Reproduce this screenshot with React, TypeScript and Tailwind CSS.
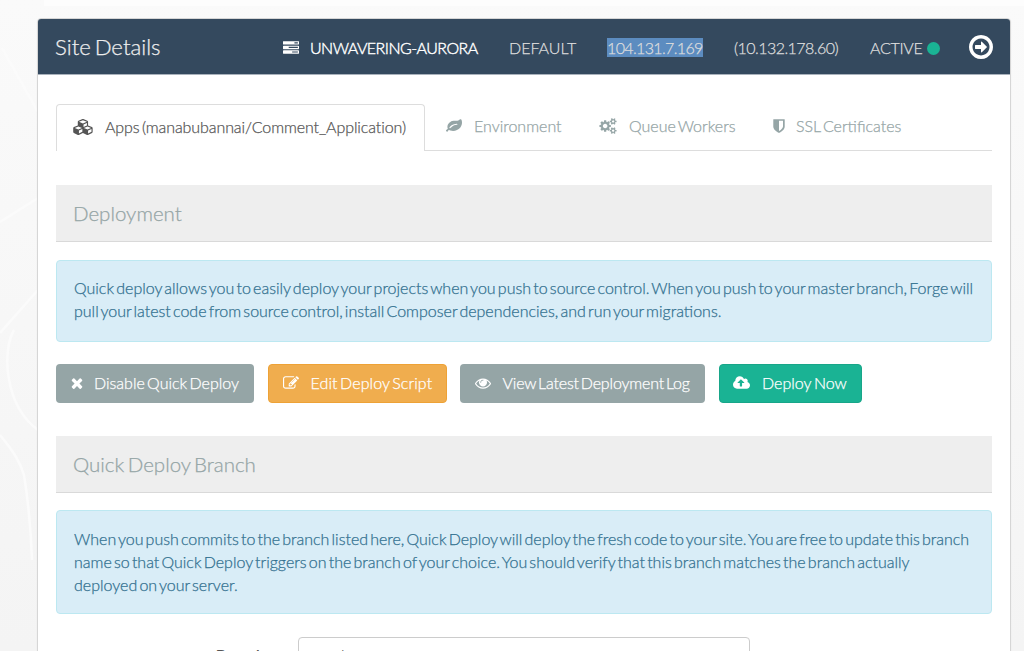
import React from "react";

type IconProps = { box: string; d: string; className: string };

function Icon({ box, d, className }: IconProps) {
  return (
    <svg viewBox={box} fill="currentColor" className={className} aria-hidden="true">
      <path d={d} />
    </svg>
  );
}

const SMALL_COG =
  "v140q0 16-149 31-12 27-30 52 51 113 51 138 0 4-4 7-122 71-124 71-8 0-46-47t-52-68q-20 2-30 2t-30-2q-14 21-52 68t-46 47q-2 0-124-71-4-3-4-7 0-25 51-138-18-25-30-52-149-15-149-31v-140q0-16 149-31 13-29 30-52-51-113-51-138 0-4 4-7 4-2 35-20t59-34 30-16q8 0 46 46.5t52 67.5q20-2 30-2t30 2q51-71 92-112l6-2q4 0 124 70 4 3 4 7 0 25-51 138 17 23 30 52 149 15 149 31z";

const ICONS = {
  tasks:
    "M1024 1408h640v-128h-640v128zm-384-512h1024v-128h-1024v128zm640-512h384v-128h-384v128zm512 832v256q0 26-19 45t-45 19h-1664q-26 0-45-19t-19-45v-256q0-26 19-45t45-19h1664q26 0 45 19t19 45zm0-512v256q0 26-19 45t-45 19h-1664q-26 0-45-19t-19-45v-256q0-26 19-45t45-19h1664q26 0 45 19t19 45zm0-512v256q0 26-19 45t-45 19h-1664q-26 0-45-19t-19-45v-256q0-26 19-45t45-19h1664q26 0 45 19t19 45z",
  cubes:
    "M640 1632l384-192v-314l-384 164v342zm-64-454l404-173-404-173-404 173zm1088 454l384-192v-314l-384 164v342zm-64-454l404-173-404-173-404 173zm-448-293l384-165v-266l-384 164v267zm-64-379l441-189-441-189-441 189zm1088 518v416q0 36-19 67t-52 47l-448 224q-25 14-57 14t-57-14l-448-224q-4-2-7-4-2 2-7 4l-448 224q-25 14-57 14t-57-14l-448-224q-33-16-52-47t-19-67v-416q0-38 21.5-70t56.5-48l434-186v-400q0-38 21.5-70t56.5-48l448-192q23-10 50-10t50 10l448 192q35 16 56.5 48t21.5 70v400l434 186q36 16 57 48t21 70z",
  leaf: "M1280 704q0-26-19-45t-45-19q-172 0-318 49.5t-259.5 134-235.5 219.5q-19 21-19 45 0 26 19 45t45 19q24 0 45-19 27-24 74-71t67-66q137-124 268.5-176t313.5-52q26 0 45-19t19-45zm512-198q0 95-20 193-46 224-184.5 383t-357.5 268q-214 108-438 108-148 0-286-47-15-5-88-42t-96-37q-16 0-39.5 32t-45 70-52.5 70-60 32q-43 0-63.5-17.5t-45.5-59.5q-2-4-6-11t-5.5-10-3-9.5-1.5-13.5q0-35 31-73.5t68-65.5 68-56 31-48q0-4-14-38t-16-44q-9-51-9-104 0-115 43.5-220t119-184.5 170.5-139 204-95.5q55-18 145-25.5t179.5-9 178.5-6 163.5-24 113.5-56.5l29.5-29.5 29.5-28 27-20 36.5-16 43.5-4.5q39 0 70.5 46t47.5 112 24 124 8 96z",
  cogs:
    "M896 896q0-106-75-181t-181-75-181 75-75 181 75 181 181 75 181-75 75-181zm768 512q0-52-38-90t-90-38-90 38-38 90q0 53 37.5 90.5t90.5 37.5 90.5-37.5 37.5-90.5zm0-1024q0-52-38-90t-90-38-90 38-38 90q0 53 37.5 90.5t90.5 37.5 90.5-37.5 37.5-90.5zm-384 421v185q0 10-7 19.5t-16 10.5l-155 24q-11 35-32 76 34 48 90 115 7 11 7 20 0 12-7 19-23 30-82.5 89.5t-78.5 59.5q-11 0-21-7l-115-90q-37 19-77 31-11 108-23 155-7 24-30 24h-186q-11 0-20-7.5t-10-17.5l-23-153q-34-10-75-31l-118 89q-7 7-20 7-11 0-21-8-144-133-144-160 0-9 7-19 10-14 41-53t47-61q-23-44-35-82l-152-24q-10-1-17-9.5t-7-19.5v-185q0-10 7-19.5t16-10.5l155-24q11-35 32-76-34-48-90-115-7-11-7-20 0-12 7-20 22-30 82-89t79-59q11 0 21 7l115 90q34-18 77-32 11-108 23-154 7-24 30-24h186q11 0 20 7.5t10 17.5l23 153q34 10 75 31l118-89q8-7 20-7 11 0 21 8 144 133 144 160 0 8-7 19-12 16-42 54t-45 60q23 48 34 82l152 23q10 2 17 10.5t7 19.5zM1920 1338" +
    SMALL_COG +
    "M1920 314" +
    SMALL_COG,
  shield:
    "M1344 960v-640h-448v1137q119-63 213-137 235-184 235-360zm192-768v768q0 86-33.5 170.5t-83 150-118 127.5-126.5 103-121 77.5-89.5 49.5-42.5 20q-12 6-26 6t-26-6q-16-7-42.5-20t-89.5-49.5-121-77.5-126.5-103-118-127.5-83-150-33.5-170.5v-768q0-26 19-45t45-19h1152q26 0 45 19t19 45z",
  times:
    "M1490 1322q0 40-28 68l-136 136q-28 28-68 28t-68-28l-294-294-294 294q-28 28-68 28t-68-28l-136-136q-28-28-28-68t28-68l294-294-294-294q-28-28-28-68t28-68l136-136q28-28 68-28t68 28l294 294 294-294q28-28 68-28t68 28l136 136q28 28 28 68t-28 68l-294 294 294 294q28 28 28 68z",
  edit: "M888 1184l116-116-152-152-116 116v56h96v96h56zm440-720q-16-16-33 1l-350 350q-17 17-1 33t33-1l350-350q17-17 1-33zm80 594v190q0 119-84.5 203.5t-203.5 84.5h-832q-119 0-203.5-84.5t-84.5-203.5v-832q0-119 84.5-203.5t203.5-84.5h832q63 0 117 25 15 7 18 23 3 17-9 29l-49 49q-14 14-32 8-23-6-45-6h-832q-66 0-113 47t-47 113v832q0 66 47 113t113 47h832q66 0 113-47t47-113v-126q0-13 9-22l64-64q15-15 35-7t20 29zm-96-738l288 288-672 672h-288v-288zm444 132l-92 92-288-288 92-92q28-28 68-28t68 28l152 152q28 28 28 68t-28 68z",
  eye: "M1664 960q-152-236-381-353 61 104 61 225 0 185-131.5 316.5t-316.5 131.5-316.5-131.5-131.5-316.5q0-121 61-225-229 117-381 353 133 205 333.5 326.5t434.5 121.5 434.5-121.5 333.5-326.5zm-720-384q0-20-14-34t-34-14q-125 0-214.5 89.5t-89.5 214.5q0 20 14 34t34 14 34-14 14-34q0-86 61-147t147-61q20 0 34-14t14-34zm848 384q0 34-20 69-140 230-376.5 368.5t-499.5 138.5-499.5-139-376.5-368q-20-35-20-69t20-69q140-229 376.5-368t499.5-139 499.5 139 376.5 368q20 35 20 69z",
  upload:
    "M1280 864q0-14-9-23l-352-352q-9-9-23-9t-23 9l-351 351q-10 12-10 24 0 14 9 23t23 9h224v352q0 13 9.5 22.5t22.5 9.5h192q13 0 22.5-9.5t9.5-22.5v-352h224q13 0 22.5-9.5t9.5-22.5zm640 288q0 159-112.5 271.5t-271.5 112.5h-1088q-185 0-316.5-131.5t-131.5-316.5q0-130 70-240t188-165q-2-30-2-43 0-212 150-362t362-150q156 0 285.5 87t188.5 231q71-62 166-62 106 0 181 75t75 181q0 76-41 138 130 31 213.5 135.5t83.5 238.5z",
  arrow:
    "M1280 896q0 14-9 23l-320 320q-9 9-23 9-13 0-22.5-9.5t-9.5-22.5v-192h-352q-13 0-22.5-9.5t-9.5-22.5v-192q0-13 9.5-22.5t22.5-9.5h352v-192q0-14 9-23t23-9q12 0 24 10l319 319q9 9 9 23zm160 0q0-148-73-273t-198-198-273-73-273 73-198 198-73 273 73 273 198 198 273 73 273-73 198-198 73-273zm224 0q0 209-103 385.5t-279.5 279.5-385.5 103-385.5-103-279.5-279.5-103-385.5 103-385.5 279.5-279.5 385.5-103 385.5 103 279.5 279.5 103 385.5z",
};

const SQUARE = "0 0 1792 1792";

function SectionHeading({ children }: { children: React.ReactNode }) {
  return (
    <h3 className="flex h-[57px] items-center border-b border-[#d9d9d9] bg-[#eeeeee] pt-[1px] pl-[17px] text-[20.5px] leading-none font-light text-[#95a5a6]">
      {children}
    </h3>
  );
}

export default function App() {
  return (
    <div className="relative h-[651px] w-[1024px] overflow-hidden bg-linear-to-b from-[#fafafa] to-[#f4f4f4] font-['Lato',sans-serif] text-[16px] font-light [word-spacing:-2.15px] [-webkit-text-stroke:0.25px]">
      <svg className="absolute inset-0 h-full w-full" viewBox="0 0 1024 651" fill="none" aria-hidden="true">
        <path d="M44 0v6h980V0z" fill="#fdfdfd" />
        <path
          d="M2 48L38 112M0 222L38 198M0 333L38 290M14 330C2 350 4 405 38 430M0 435C14 452 20 462 24 475C28 500 31 530 32 560"
          stroke="#fbfbfb"
          strokeWidth="2.5"
        />
      </svg>
      <main className="relative mt-[18px] ml-[37px] h-[660px] w-[974px] rounded-[4px] border border-[#d6d6d6] bg-white shadow-[0_1px_2px_rgba(0,0,0,0.06)]">
        <header className="flex h-[56px] items-center rounded-t-[3px] border-b border-[#a9b2bc] bg-[#34495e] pt-[1px] pr-[17px] pl-[17px] text-[#dddddd]">
          <h1 className="w-[228px] pt-[1px] text-[22.2px] leading-none text-[#eeeeee]">Site Details</h1>
          <div className="flex w-[226px] items-center pt-[2px] text-white [-webkit-text-stroke:0.4px]">
            <Icon box={SQUARE} d={ICONS.tasks} className="mr-[11px] h-[16px] w-[16px]" />
            <span className="tracking-[-0.54px]">UNWAVERING-AURORA</span>
          </div>
          <span className="w-[98px] pt-[2px]">DEFAULT</span>
          <span className="w-[127px] pt-[2px]">
            <span className="bg-[#5c8cc0] tracking-[-0.64px]">104.131.7.169</span>
          </span>
          <span className="w-[136px] pt-[2px] tracking-[-0.55px]">(10.132.178.60)</span>
          <span className="w-[52px] pt-[2px] tracking-[-0.3px]">ACTIVE</span>
          <span className="mt-[2px] ml-[5px] h-[13px] w-[13px] rounded-full bg-[#1ab394]" />
          <Icon box="128 128 1536 1536" d={ICONS.arrow} className="ml-auto h-[24px] w-[24px] text-white" />
        </header>
        <div className="pr-[18px] pl-[18px] pt-[29px]">
          <nav className="flex h-[47px] text-[#95a5a6]">
            <div className="flex w-[369px] items-center rounded-t-[4px] border border-b-0 border-[#dddddd] pb-[3px] pl-[16px] text-[#555555]">
              <Icon box="0 0 2304 1792" d={ICONS.cubes} className="mr-[11px] h-[16px] w-[21px]" />
              <span className="tracking-[-0.09px] [word-spacing:-1.8px]">Apps (manabubannai/Comment_Application)</span>
            </div>
            <div className="flex flex-1 items-center border-b border-[#dddddd] pb-[2px] pl-[21px]">
              <Icon box={SQUARE} d={ICONS.leaf} className="mr-[12px] h-[16px] w-[16px]" />
              <span className="w-[125px]">Environment</span>
              <Icon box="0 0 1920 1792" d={ICONS.cogs} className="mr-[12px] h-[16px] w-[18px]" />
              <span className="w-[144px]">Queue Workers</span>
              <Icon box="256 0 1280 1792" d={ICONS.shield} className="mr-[11px] h-[16px] w-[12px]" />
              <span>SSL Certificates</span>
            </div>
          </nav>
          <div className="mt-[34px]">
            <SectionHeading>Deployment</SectionHeading>
          </div>
          <p className="mt-[18px] h-[82px] rounded-[4px] border border-[#bce8f1] bg-[#d9edf7] pt-[15px] pl-[17px] leading-[23px] whitespace-nowrap text-[#31708f]">
            <span className="block">Quick deploy allows you to easily deploy your projects when you push to source control. When you push to your master branch, Forge will</span>
            <span className="block">pull your latest code from source control, install Composer dependencies, and run your migrations.</span>
          </p>
          <div className="mt-[22px] flex h-[39px] gap-[13.5px] text-white">
            <button className="flex w-[198px] items-center rounded-[4px] bg-[#95a5a6] pb-[2px] pl-[15px] [word-spacing:-2px]">
              <Icon box="256 0 1280 1792" d={ICONS.times} className="mt-[1px] mr-[11px] h-[16px] w-[12px]" />
              <span>Disable Quick Deploy</span>
            </button>
            <button className="flex w-[179px] items-center rounded-[4px] border border-[#eea236] bg-[#f0ad4e] pb-[2px] pl-[14px] [word-spacing:-2px]">
              <Icon box={SQUARE} d={ICONS.edit} className="mr-[12px] h-[16px] w-[16px]" />
              <span className="tracking-[0.1px]">Edit Deploy Script</span>
            </button>
            <button className="flex w-[245px] items-center rounded-[4px] bg-[#95a5a6] pb-[2px] pl-[15px] [word-spacing:-2.2px]">
              <Icon box={SQUARE} d={ICONS.eye} className="mr-[11.5px] h-[16px] w-[16px]" />
              <span className="tracking-[-0.17px]">View Latest Deployment Log</span>
            </button>
            <button className="flex w-[143px] items-center rounded-[4px] border border-[#18a689] bg-[#1ab394] pb-[2px] pl-[13px] [word-spacing:-1.5px]">
              <Icon box="0 0 1920 1792" d={ICONS.upload} className="mr-[12.5px] h-[16px] w-[17px]" />
              <span>Deploy Now</span>
            </button>
          </div>
          <div className="mt-[33px]">
            <SectionHeading>Quick Deploy Branch</SectionHeading>
          </div>
          <p className="mt-[17px] h-[104px] rounded-[4px] border border-[#bce8f1] bg-[#d9edf7] pt-[16px] pl-[17px] leading-[23px] whitespace-nowrap text-[#31708f]">
            <span className="block [word-spacing:-2.22px]">When you push commits to the branch listed here, Quick Deploy will deploy the fresh code to your site. You are free to update this branch</span>
            <span className="block">name so that Quick Deploy triggers on the branch of your choice. You should verify that this branch matches the branch actually</span>
            <span className="block">deployed on your server.</span>
          </p>
          <form className="mt-[23px] flex">
            <label className="w-[242px] pt-[6px] pr-[33px] text-right font-normal text-[#555555]">Branch</label>
            <div className="h-[38px] w-[452px] rounded-[4px] border border-[#cccccc] bg-white pt-[5px] pl-[14px] text-[#555555]">master</div>
          </form>
        </div>
      </main>
    </div>
  );
}
